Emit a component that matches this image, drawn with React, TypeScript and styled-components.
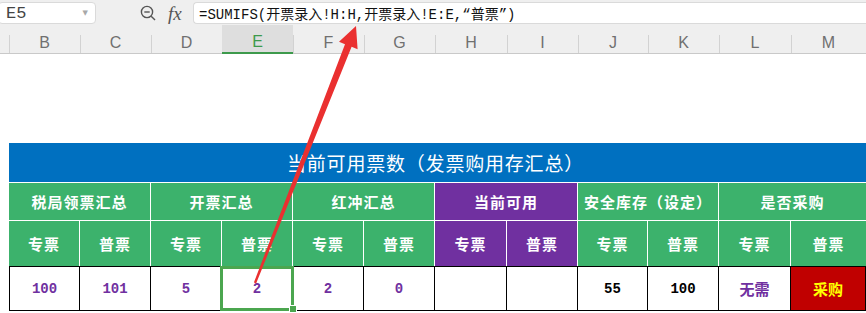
import React from 'react'
import styled, {createGlobalStyle} from 'styled-components'

const COLS = [71, 71, 71, 71, 71, 71, 72, 71, 70, 71, 72, 75]
const colTemplate = COLS.map(w => `${w}px`).join(' ')
const LETTERS = ['B', 'C', 'D', 'E', 'F', 'G', 'H', 'I', 'J', 'K', 'L', 'M']

const GREEN = '#3cb26c'
const PURPLE = '#7030a0'
const BLUE = '#0070c0'
const CJK = `"Noto Sans CJK SC", "Liberation Sans", sans-serif`
const MONO = `"Liberation Mono", "Noto Sans CJK SC", monospace`

const GlobalStyle = createGlobalStyle`
    * { box-sizing: border-box; }
    body {
        margin: 0;
        background: #fff;
        overflow: hidden;
    }
`

const Page = styled.div`
    position: relative;
    width: 866px;
    height: 313px;
    overflow: hidden;
    background: #fff;
`

const FormulaBar = styled.div`
    height: 25px;
    background: #efefef;
    display: flex;
    align-items: center;
    padding-top: 1px;
`

const NameBox = styled.div`
    width: 98px;
    height: 22px;
    margin-left: -2px;
    background: #fff;
    border: 1px solid #dadada;
    border-radius: 4px;
    display: flex;
    align-items: center;
    justify-content: space-between;
    padding: 0 7px 0 7px;
    font-family: "Liberation Mono", monospace;
    font-size: 17px;
    color: #444;
`

const Caret = styled.span`
    font-family: "DejaVu Sans", sans-serif;
    font-size: 7px;
    color: #a8a8a8;
`

const Tools = styled.div`
    display: flex;
    align-items: center;
    gap: 11px;
    margin-left: 44px;
    width: 53px;
`

const Fx = styled.span`
    font-family: "Liberation Serif", serif;
    font-style: italic;
    font-size: 19px;
    color: #555;
    line-height: 1;
`

const FormulaInput = styled.div`
    flex: 1;
    height: 22px;
    background: #fff;
    border: 1px solid #dadada;
    border-right: none;
    border-radius: 4px 0 0 4px;
    display: flex;
    align-items: center;
    padding-left: 5px;
    font-family: ${MONO};
    font-size: 14px;
    color: #111;
    white-space: nowrap;
`

const ColumnHeads = styled.div`
    display: grid;
    grid-template-columns: 9px ${colTemplate};
    height: 29px;
    background: #efefef;
    border-bottom: 1px solid #c9c9c9;
`

const ColLetter = styled.div<{$active?: boolean}>`
    display: flex;
    align-items: center;
    justify-content: center;
    padding-top: 7px;
    font-family: "Liberation Sans", sans-serif;
    font-size: 16px;
    color: ${p => p.$active ? '#3d9a4c' : '#707070'};
    background: ${p => p.$active
        ? '#dedede'
        : 'linear-gradient(#d2d2d2, #d2d2d2) left bottom / 1px 18px no-repeat'};
    border-bottom: ${p => p.$active ? '2px solid #3d9a4c' : 'none'};
    margin-bottom: ${p => p.$active ? '-1px' : '0'};
`

const Blank = styled.div`
    height: 89px;
`

const Sheet = styled.div`
    display: grid;
    grid-template-columns: ${colTemplate};
    grid-template-rows: 40px 38px 45px 45px;
    margin-left: 9px;
`

const Title = styled.div`
    grid-column: 1 / -1;
    background: ${BLUE};
    border-bottom: 1px solid #fff;
    color: #fff;
    font-family: ${CJK};
    font-size: 19px;
    font-weight: 400;
    letter-spacing: 0.8px;
    display: flex;
    align-items: center;
    justify-content: center;
    padding-right: 4px;
`

const HeadCell = styled.div<{$tone?: 'green' | 'purple'; $span?: number; $last?: boolean}>`
    grid-column: span ${p => p.$span || 1};
    background: ${p => p.$tone === 'purple' ? PURPLE : GREEN};
    border-right: ${p => p.$last ? 'none' : '1px solid #fff'};
    border-bottom: ${p => p.$span ? '1px solid #fff' : 'none'};
    color: #fff;
    font-family: ${CJK};
    font-size: 15px;
    font-weight: 700;
    letter-spacing: 1px;
    display: flex;
    align-items: center;
    justify-content: center;
`

const DataCell = styled.div<{$ink?: string; $fill?: string; $first?: boolean; $selected?: boolean}>`
    position: relative;
    background: ${p => p.$fill || '#fff'};
    color: ${p => p.$ink || PURPLE};
    border-top: 1px solid #000;
    border-bottom: 1px solid #000;
    border-right: 1px solid #000;
    border-left: ${p => p.$first ? '1px solid #000' : 'none'};
    font-family: ${MONO};
    font-size: 14px;
    font-weight: 700;
    display: flex;
    align-items: center;
    justify-content: center;
    z-index: ${p => p.$selected ? 2 : 1};

    ${p => p.$selected && `
        &::after {
            content: '';
            position: absolute;
            top: -1px;
            left: -2px;
            right: -2px;
            bottom: -1px;
            border: 3px solid #4ba64f;
        }
        &::before {
            content: '';
            position: absolute;
            right: -5px;
            bottom: -3px;
            width: 6px;
            height: 6px;
            background: #4ba64f;
            border: 1px solid #fff;
            z-index: 3;
        }
    `}
`

const CjkValue = styled.span`
    font-family: ${CJK};
    font-size: 15px;
`

const ArrowLayer = styled.svg`
    position: absolute;
    left: 0;
    top: 0;
    width: 866px;
    height: 313px;
    pointer-events: none;
    z-index: 10;
`

const ZoomIcon = () => (
    <svg width="17" height="17" viewBox="0 0 17 17" fill="none" stroke="#555" strokeWidth="1.4">
        <circle cx="7" cy="7" r="5.6"/>
        <line x1="4.3" y1="7" x2="9.7" y2="7"/>
        <line x1="11.2" y1="11.2" x2="15" y2="15"/>
    </svg>
)

const groups: {label: string; tone: 'green' | 'purple'}[] = [
    {label: '税局领票汇总', tone: 'green'},
    {label: '开票汇总', tone: 'green'},
    {label: '红冲汇总', tone: 'green'},
    {label: '当前可用', tone: 'purple'},
    {label: '安全库存（设定）', tone: 'green'},
    {label: '是否采购', tone: 'green'},
]

const App = () => {
    return (
        <Page>
            <GlobalStyle/>
            <FormulaBar>
                <NameBox>
                    <span>E5</span>
                    <Caret>▼</Caret>
                </NameBox>
                <Tools>
                    <ZoomIcon/>
                    <Fx>fx</Fx>
                </Tools>
                <FormulaInput>=SUMIFS(开票录入!H:H,开票录入!E:E,“普票”)</FormulaInput>
            </FormulaBar>

            <ColumnHeads>
                <div/>
                {LETTERS.map(l => <ColLetter key={l} $active={l === 'E'}>{l}</ColLetter>)}
            </ColumnHeads>

            <Blank/>

            <Sheet>
                <Title>当前可用票数（发票购用存汇总）</Title>
                {groups.map((g, i) => (
                    <HeadCell key={g.label} $tone={g.tone} $span={2} $last={i === groups.length - 1}>{g.label}</HeadCell>
                ))}
                {groups.map((g, i) => (
                    <React.Fragment key={g.label + '-sub'}>
                        <HeadCell $tone={g.tone}>专票</HeadCell>
                        <HeadCell $tone={g.tone} $last={i === groups.length - 1}>普票</HeadCell>
                    </React.Fragment>
                ))}
                <DataCell $first>100</DataCell>
                <DataCell>101</DataCell>
                <DataCell>5</DataCell>
                <DataCell $selected>2</DataCell>
                <DataCell>2</DataCell>
                <DataCell>0</DataCell>
                <DataCell/>
                <DataCell/>
                <DataCell $ink="#000">55</DataCell>
                <DataCell $ink="#000">100</DataCell>
                <DataCell><CjkValue>无需</CjkValue></DataCell>
                <DataCell $fill="#c00000" $ink="#ffff00"><CjkValue>采购</CjkValue></DataCell>
            </Sheet>

            <ArrowLayer viewBox="0 0 866 313">
                <polygon
                    fill="#ea3030"
                    points="253.9,282.6 256.1,283.4 351.6,46.8 357.6,49.2 356,26 339,41.8 345,44.2"
                />
            </ArrowLayer>
        </Page>
    )
}

export default App
